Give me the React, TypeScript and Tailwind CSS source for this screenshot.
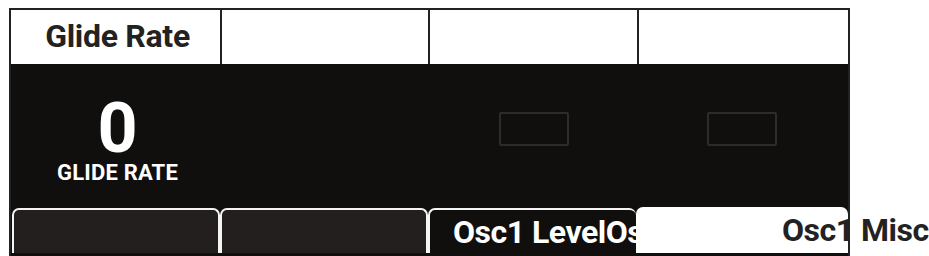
import React from "react";

const font = { fontFamily: "Roboto, 'Liberation Sans', sans-serif" };

export default function App() {
  return (
    <div className="w-[929px] h-[256px] bg-white overflow-hidden" style={font}>
      <div className="ml-[9px] mt-[8px] w-[841px] h-[248px] bg-[#222222] pt-[2px] px-[2px] flex flex-col">
        {/* Header row */}
        <div className="grid grid-cols-[209px_206px_207px_209px] gap-[2px] h-[54px] shrink-0">
          <div className="bg-white flex items-center justify-center pl-[4px] pb-[2px]">
            <span className="text-[32px] leading-none font-bold text-[#222222] tracking-[-0.3px]">Glide Rate</span>
          </div>
          <div className="bg-white" />
          <div className="bg-white" />
          <div className="bg-white" />
        </div>

        {/* Middle area */}
        <div className="grid grid-cols-[209px_206px_207px_209px] gap-[2px] h-[144px] shrink-0 bg-[#100f0e]">
          <div className="flex flex-col items-center pt-[33px] pl-[4px]">
            <span className="text-[70px] leading-[62px] font-bold text-white">0</span>
            <span className="text-[22px] leading-none font-bold text-white mt-[3px] tracking-[0.2px]">GLIDE RATE</span>
          </div>
          <div />
          <div className="flex justify-center pt-[48px]">
            <div className="w-[70px] h-[34px] border-2 border-[#2e2c2b] rounded-[2px]" />
          </div>
          <div className="flex justify-center pt-[48px] pr-[4px]">
            <div className="w-[70px] h-[34px] border-2 border-[#2e2c2b] rounded-[2px]" />
          </div>
        </div>

        {/* Tab row */}
        <div className="grid grid-cols-[209px_208px_208px_212px] h-[45px] shrink-0 bg-[#100f0e]">
          <div className="border-2 border-b-0 border-[#f4f4f4] rounded-t-[7px] bg-[#231f1f] ml-[1px]" />
          <div className="border-2 border-b-0 border-[#f4f4f4] rounded-t-[7px] bg-[#231f1f]" />
          <div className="border-2 border-b-0 border-r-0 border-[#f4f4f4] rounded-t-[7px] bg-[#100f0e] overflow-hidden flex items-center pl-[23px]">
            <span className="text-[32px] leading-none font-bold text-white whitespace-nowrap tracking-[-0.5px]">Osc1 LevelOsc1 Misc</span>
          </div>
          <div className="relative bg-white rounded-t-[7px] -mt-[1px] flex items-center pl-[146px]">
            <span className="text-[32px] leading-none font-bold text-[#222222] whitespace-nowrap tracking-[-0.5px]">Osc1 Misc</span>
          </div>
        </div>
        <div className="h-[3px] bg-[#100f0e]" />
      </div>
    </div>
  );
}
